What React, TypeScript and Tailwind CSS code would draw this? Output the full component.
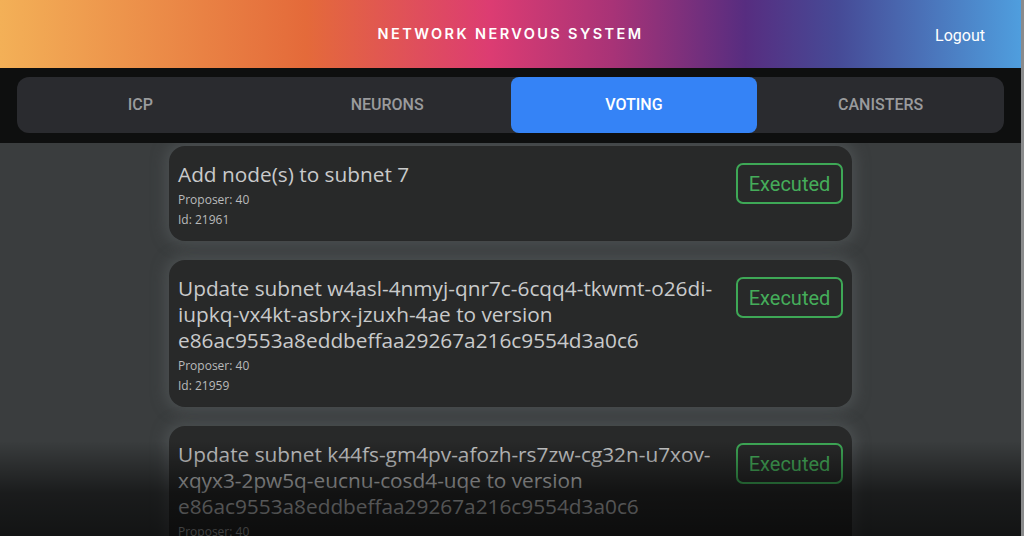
import React from "react";

const proposals = [
  {
    title: "Add node(s) to subnet 7",
    proposer: "40",
    id: "21961",
  },
  {
    title:
      "Update subnet w4asl-4nmyj-qnr7c-6cqq4-tkwmt-o26di-iupkq-vx4kt-asbrx-jzuxh-4ae to version e86ac9553a8eddbeffaa29267a216c9554d3a0c6",
    proposer: "40",
    id: "21959",
  },
  {
    title:
      "Update subnet k44fs-gm4pv-afozh-rs7zw-cg32n-u7xov-xqyx3-2pw5q-eucnu-cosd4-uqe to version e86ac9553a8eddbeffaa29267a216c9554d3a0c6",
    proposer: "40",
    id: "21957",
  },
];

const tabs = ["ICP", "NEURONS", "VOTING", "CANISTERS"];

export default function App() {
  return (
    <div className="flex h-[536px] w-[1024px] overflow-hidden bg-[#3a3d3e] font-['Roboto',sans-serif]">
      <div className="relative flex min-w-0 flex-1 flex-col">
        <header className="relative flex h-[68px] shrink-0 items-center justify-center bg-[linear-gradient(90deg,#f3b057_0%,#e46a3a_30%,#dc3c72_48%,#a83377_60%,#572d80_73%,#464a96_82%,#4f9ede_100%)]">
          <h1 className="font-['Inter',sans-serif] text-[14.5px] font-semibold tracking-[0.165em] text-white">
            NETWORK NERVOUS SYSTEM
          </h1>
          <button className="absolute right-[36px] top-[24px] text-[16px] text-white">Logout</button>
        </header>
        <nav className="shrink-0 bg-[#0e0f0f] px-[17px] pb-[10px] pt-[9px]">
          <div className="grid h-[56px] grid-cols-4 rounded-[12px] bg-[#2a2b2f]">
            {tabs.map((t) => (
              <div
                key={t}
                className={
                  t === "VOTING"
                    ? "flex items-center justify-center rounded-[8px] bg-[#3583f6] text-[16px] font-medium text-white"
                    : "flex items-center justify-center text-[16px] font-medium text-[#9a9b9d]"
                }
              >
                {t}
              </div>
            ))}
          </div>
        </nav>
        <main className="flex flex-1 flex-col items-center gap-[19px] overflow-hidden pt-[3px]">
          {proposals.map((p) => (
            <div
              key={p.id}
              className="flex w-[683px] shrink-0 items-start justify-between gap-4 rounded-[16px] bg-[#282929] px-[9px] pb-[12px] pt-[15px] shadow-[0_0_14px_4px_rgba(90,94,96,0.55)]"
            >
              <div className="min-w-0 flex-1 font-['Open_Sans',sans-serif]">
                <div className="text-[20.8px] leading-[26px] text-[#c9cacb]">{p.title}</div>
                <div className="mt-[3px] text-[12px] leading-[20px] text-[#b9babb]">Proposer: {p.proposer}</div>
                <div className="text-[12px] leading-[19px] text-[#b9babb]">Id: {p.id}</div>
              </div>
              <div className="mt-[2px] flex h-[41px] w-[107px] shrink-0 items-center justify-center rounded-[7px] border-2 border-[#3ea856] text-[20px] text-[#45ad5a]">
                Executed
              </div>
            </div>
          ))}
        </main>
        <div className="pointer-events-none absolute bottom-0 left-0 right-0 h-[95px] bg-[linear-gradient(180deg,rgba(0,0,0,0)_0%,rgba(0,0,0,0.55)_55%,rgba(0,0,0,0.68)_100%)]" />
      </div>
      <div className="w-[3px] shrink-0 bg-[#8a8b8c]" />
    </div>
  );
}
